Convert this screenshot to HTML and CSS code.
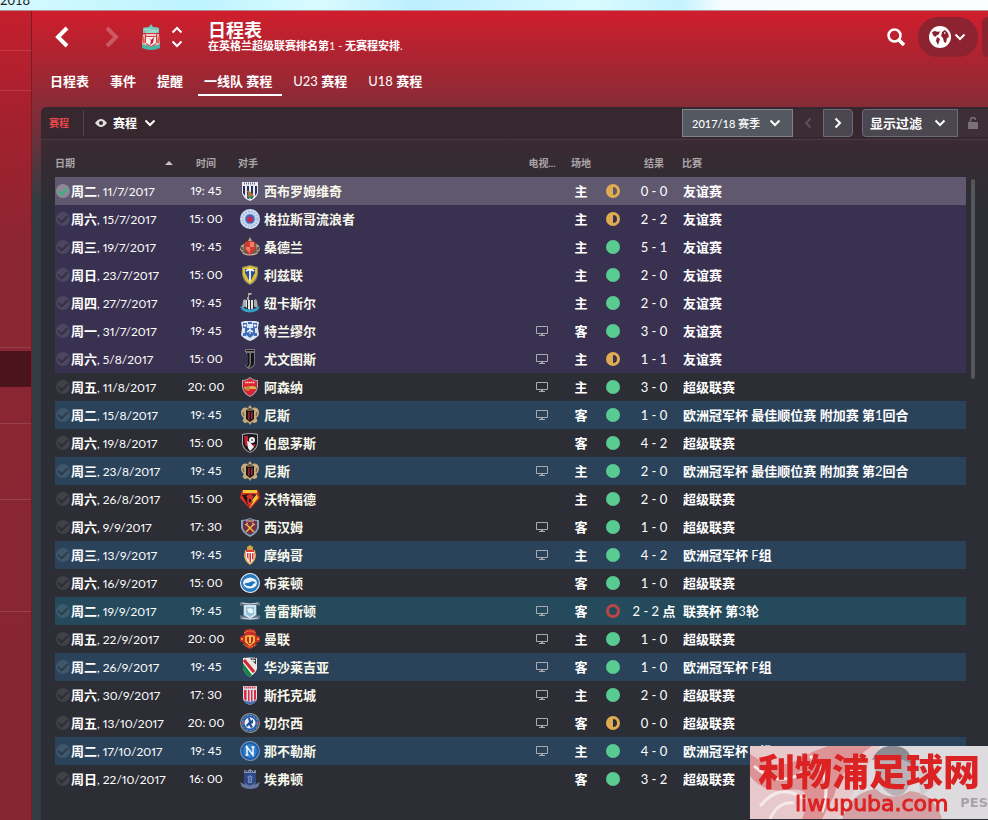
FILE: index.html
```html
<!DOCTYPE html>
<html lang="zh-CN">
  <head>
    <meta charset="UTF-8" />
    <meta name="viewport" content="width=device-width, initial-scale=1.0" />
    <title>日程表</title>
    <link rel="stylesheet" href="styles.css">
  </head>
  <body>
    <!-- club crests, all on a 20x20 grid -->
    <svg class="sprite" aria-hidden="true">
      <symbol id="chevron" viewBox="0 0 12 8"><path d="M1.500 1.500 6 6l4.500-4.500" fill="none" stroke="currentColor" stroke-width="2" /></symbol>
      <symbol id="wba" viewBox="0 0 20 20"><path d="M2 1h16v11q-1 5-8 8-7-3-8-8z" fill="#e9eaf2" /><path d="M3 5h2v10l-2-3zm4 0h2v13l-2-1zm4 0h2v12l-2 1zm4 0h2v7l-2 3z" fill="#27305f" /><path d="M4 2.500h12" stroke="#6a708f" stroke-width="2" stroke-dasharray="1 1" /><path d="M6 9l3 1 4 3 1 3-4-1-3 1 1-4z" fill="#a9713e" /><path d="M7 15h7l-4 3z" fill="#3c9354" /></symbol>
      <symbol id="rangers" viewBox="0 0 20 20"><circle cx="10" cy="10" r="10" fill="#d6e2f3" /><circle cx="10" cy="10" r="7.500" fill="none" stroke="#a9c0e6" stroke-width="2.500" stroke-dasharray="2 1" /><circle cx="10" cy="10" r="5.500" fill="#8fb0df" /><circle cx="10" cy="10" r="4.500" fill="#4662ae" /><path d="M7.500 8h5v4L10 13.500 7.500 12z" fill="#d4264d" /></symbol>
      <symbol id="sunderland" viewBox="0 0 20 20"><path d="M10 0l2 4H8z" fill="#b6a983" /><path d="M1 8q4-3 9-3t9 3v7q-4 3-9 3t-9-3z" fill="#6d5a50" /><path d="M5 5q5-2 10 0v8l-5 5-5-5z" fill="#d53a31" /><path d="M10 5h4v5h-4zM6 10h4v6l-4-4z" fill="#ee806b" /><path d="M4 7 1 9l-1 4 3 2zM16 7l3 2 1 4-3 2z" fill="#bcae90" /><path d="M2 10v3M18 10v3" stroke="#443b38" stroke-width="1.500" /><path d="M2 15q8 5 16 0l-1 2q-7 3-14 0z" fill="#d9b7a4" /></symbol>
      <symbol id="leeds" viewBox="0 0 20 20"><path d="M2 2q4-1 8-2 4 1 8 2v7q-1 8-8 11-7-3-8-11z" fill="#8b8a6c" /><path d="M3 3q4-1 7-2 3 1 7 2v6q-1 6-7 10-6-4-7-10z" fill="#e6c42b" /><path d="M5 4h10v5q-1 5-5 8-4-3-5-8z" fill="#2d4c9c" /><path d="M10 4v13" stroke="#dfe3ee" stroke-width="2" /><path d="M6 6q4-3 8 0" fill="none" stroke="#fff" stroke-width="2" /><path d="M5 9l4 8M15 9l-4 8" stroke="#e6c42b" stroke-width="1.500" /></symbol>
      <symbol id="newcastle" viewBox="0 0 20 20"><path d="M8 0h4l-1 2h-2v5h3v3H7V4h1z" fill="#b5a697" /><path d="M3 8q1-3 3-1l1 6-5 2zM17 8q-1-3-3-1l-1 6 5 2z" fill="#a4adb0" /><path d="M6 7h8v7q-2 3-4 3t-4-3z" fill="#e6e6e6" /><path d="M7 7h1v9H7zm3 0h1v10h-1zm3 0h1v8h-1z" fill="#212429" /><path d="M0 13q10 7 20 0l-2 4q-8 5-16 0z" fill="#32a2c7" /></symbol>
      <symbol id="tranmere" viewBox="0 0 20 20"><path d="M1 1l4-1h10l4 1-1 6 1 7q-3 4-9 6-6-2-9-6l1-7z" fill="#dce5f4" /><path d="M3 2h4v5H3zm10 0h4v5h-4zM3 12h3v3H3zm11 0h3v3h-3zM8 1h4v2H8z" fill="#446dbb" /><path d="M5 7h10v6l-5 4-5-4z" fill="#3d6cba" /><path d="M5 3v3M15 3v3M3.500 4.500h3M13.500 4.500h3M10 6v7" stroke="#fff" /><path d="M7 11l3-2 3 2" stroke="#fff" fill="none" stroke-width="1.500" /></symbol>
      <symbol id="juventus" viewBox="0 0 20 20"><path d="M5 0h10v3H5zM6 3h9v11q0 4-6 6-3-1-4-4 3 0 3-3V5H6z" fill="#77757b" /><path d="M6 1h8v1H6zM7 4h2.500v10q0 3-3 4v-2q1.500 0 1.500-3V5H7zM11 4h3v10q0 3-5 5 2-2 2-5z" fill="#121217" /></symbol>
      <symbol id="arsenal" viewBox="0 0 20 20"><path d="M2 3q5 0 8-3 3 3 8 3v7q-1 7-8 10-7-3-8-10z" fill="#a8aebb" /><path d="M3 4q4 0 7-3 3 3 7 3v6q-1 6-7 9-6-3-7-9z" fill="#dc2430" /><path d="M5 5.500h10" stroke="#f4d9d4" stroke-width="1.500" stroke-dasharray="1.500 .5" /><path d="M4 10l9-1 3 1v2H8q-1 2-3 0z" fill="#d9b457" /><circle cx="8" cy="12" r="2" fill="#b98735" /></symbol>
      <symbol id="nice" viewBox="0 0 20 20"><path d="M10 0l2 3q6-2 7 4 0 4-3 6 3 3-1 5-2 0-3-1l-2 3-2-3q-1 1-3 1-4-2-1-5-3-2-3-6 1-6 7-4z" fill="#c6ab7d" /><path d="M6 5h8v9l-4 3-4-3z" fill="#17161a" /><path d="M8 7h1.500v8H8zm3 0h1.500v7H11z" fill="#a3262e" /><path d="M7 4q3-2 6 0v2H7z" fill="#6c5c48" /><path d="M3 7l1 4M17 7l-1 4" stroke="#6c5c48" /></symbol>
      <symbol id="bournemouth" viewBox="0 0 20 20"><path d="M2 1q8-2 16 0v10q-1 6-8 9-7-3-8-9z" fill="#aaa8aa" /><path d="M3 2q7-2 14 0v9q-1 5-7 8-6-3-7-8z" fill="#17171a" /><path d="M4 3h4v11l-3-2zM14 11l2 1-6 6v-3z" fill="#c71f31" /><path d="M7 8l3 1 4 5-4 4-2-3z" fill="#eee" /><circle cx="12" cy="7" r="3" fill="#f3f3f3" /><path d="M11 7l1-1 1 1-1 1z" fill="#111" /></symbol>
      <symbol id="watford" viewBox="0 0 20 20"><path d="M2 1h16l2 8-10 11L0 9z" fill="#e13229" /><path d="M3 1h14v3H3z" fill="#f1c835" /><path d="M2 6l7 12-2-8 2-2V5zM11 5v13l7-12z" fill="#191515" /><path d="M17 5l1 4-8 10 2-8z" fill="#f3cf36" /><path d="M6 7l4-2 4 2-2 3 1 3-3 5-3-5 1-3z" fill="#d5342a" /><path d="M9 10h2v3H9z" fill="#191515" /></symbol>
      <symbol id="westham" viewBox="0 0 20 20"><path d="M1 3q5 0 9-2 4 2 9 2v8q-2 6-9 9-7-3-9-9z" fill="#7ea4ba" /><path d="M3 4q4 0 7-2 3 2 7 2v7q-2 5-7 7-5-2-7-7z" fill="#762c41" /><path d="M6 7l8 8M14 7l-8 8" stroke="#e9bd48" stroke-width="1.500" /><path d="M5 8l3-2M12 6l3 2M6 4h8" stroke="#ddc9af" /></symbol>
      <symbol id="monaco" viewBox="0 0 20 20"><path d="M7 2l3-2 3 2v3H7z" fill="#d1a53c" /><path d="M5 5h10l1 6q-1 6-6 9-5-3-6-9z" fill="#dcb35d" /><path d="M6 6h8v6q-1 4-4 6-3-2-4-6z" fill="#fff" /><path d="M7 8h1.500v7L7 12zm2.500 0H11v9H9.500zM12 8h1.500v5L12 15z" fill="#dc2f36" /><path d="M6 5h8v2H6z" fill="#e13b3b" /></symbol>
      <symbol id="brighton" viewBox="0 0 20 20"><circle cx="10" cy="10" r="10" fill="#eef4fa" /><circle cx="10" cy="10" r="9" fill="#2879bd" /><path d="M4 7q6-5 12 0l1 3-1 3q-6 5-12 0l-1-3z" fill="#eef6fc" /><path d="M4 9q3 2 6 0l3-1 3 2q-3 0-4 3-5 1-8-2l2-1z" fill="#2176bb" /></symbol>
      <symbol id="preston" viewBox="0 0 20 20"><path d="M0 1q10 3 20 0v4l-3-1v11l3-1v4q-10 2-20 0v-4l3 1V4L0 5z" fill="#66788f" /><path d="M2 2q8 2 16 0M2 17q8 2 16 0" stroke="#d5dfe9" fill="none" /><path d="M4 4h12v10l-6 4-6-4z" fill="#d5e5ee" /><path d="M6 6h8v7l-4 3-4-3z" fill="#8fc3de" /><path d="M7 8l4-1 2 2v3H9z" fill="#eef7fb" /></symbol>
      <symbol id="manutd" viewBox="0 0 20 20"><path d="M5 1q5-2 10 0l1 5 4 2v4l-4 2q-2 5-6 6-4-1-6-6l-4-2V8l4-2z" fill="#c92c29" /><path d="M4 4q6-4 12 0M3 15q7 6 14 0" fill="none" stroke="#e8a536" stroke-dasharray="2 1" /><path d="M5 7q5-2 10 0v6l-5 4-5-4z" fill="#edb73e" /><path d="M7 8h6v4l-2 3H9l-2-3z" fill="#b92825" /><path d="M9 8h2v6H9z" fill="#f0c84f" /><circle cx="2" cy="10" r="1" fill="#efb938" /><circle cx="18" cy="10" r="1" fill="#efb938" /></symbol>
      <symbol id="legia" viewBox="0 0 20 20"><path d="M3 1q7-1 14 0v11q-2 5-7 8-5-3-7-8z" fill="#ebe9e1" /><path d="M3 6l9 12-2 2q-5-3-7-8z" fill="#168447" /><path d="M4 3l10 12" stroke="#d32431" stroke-width="3" /><path d="M10 1.500h6v6z" fill="#393a36" /><path d="M12 3l3 1" stroke="#eee" stroke-width="1.500" /></symbol>
      <symbol id="stoke" viewBox="0 0 20 20"><path d="M3 1h14v12q0 5-7 7-7-2-7-7z" fill="#dbe0ea" /><path d="M4 5h2.500v11L4 14zm4 0h1.500v11H8zm3 0h1.500v11H11zm3 0h2v9l-2 2z" fill="#d82d43" /><path d="M4 2.500h12" stroke="#dc5265" stroke-width="2" stroke-dasharray="1.500 .5" /><path d="M3 15q7 3 14 0-2 4-7 5-5-1-7-5z" fill="#4a6eab" /></symbol>
      <symbol id="chelsea" viewBox="0 0 20 20"><circle cx="10" cy="10" r="10" fill="#9c9a84" /><circle cx="10" cy="10" r="9" fill="#2257a2" /><circle cx="10" cy="10" r="7.500" fill="none" stroke="#8ba8d2" stroke-dasharray="2 1.500" /><circle cx="10" cy="10" r="5.500" fill="#f2f4f8" /><path d="M8 5h2l1 3 2-2v4l-2 1 2 3-2 1-2-3-2 2-1-2 3-3z" fill="#1c4b97" /><circle cx="3" cy="10" r="1" fill="#d34646" /><circle cx="17" cy="10" r="1" fill="#d34646" /></symbol>
      <symbol id="napoli" viewBox="0 0 20 20"><circle cx="10" cy="10" r="10" fill="#7f9bbb" /><circle cx="10" cy="10" r="9" fill="#1f5ba8" /><circle cx="10" cy="10" r="7" fill="#2f7fcb" /><path d="M7 14V6l6 8V6M5.500 6H8M5.500 14h3M11.500 6h3" fill="none" stroke="#f4fbff" stroke-width="1.500" /></symbol>
      <symbol id="everton" viewBox="0 0 20 20"><path d="M4 1l3 1 3-2 3 2 3-1v12q-2 4-6 6-4-2-6-6z" fill="#8492b3" /><path d="M4 4h12v9l-6 5-6-5z" fill="#2f4888" /><path d="M7 8l3-2 3 2-1 1v5H8V9z" fill="#7186bb" /><path d="M10 8v5" stroke="#33498a" /><path d="M0 13l4 2q6 3 12 0l4-2-2 5q-8 4-16 0z" fill="#6577a4" /><path d="M5 2.500h10" stroke="#38466d" stroke-dasharray="1 1" /></symbol>
      <symbol id="liverpool" viewBox="0 0 20 26"><path d="M2 4q3-1 6-1l2-3 2 3q3 0 6 1v5H2z" fill="#76c9bd" /><path d="M3 5l14 2M5 8h10" stroke="#b9e2d9" /><path d="M2 10h16l1 10-4 3H5l-4-3z" fill="#e4b9b5" /><path d="M4 9h12v9q-2 4-6 5-4-1-6-5z" fill="#d43b45" /><path d="M5 10h10v2H5z" fill="#f0c9c6" /><path d="M5 13h10v6l-5 3-5-3z" fill="#f8eeee" /><path d="M8 14l2 2 3-3-1 6-3 2 1-4z" fill="#c61b32" /><path d="M2 13l1 6M18 13l-1 6" stroke="#d9614a" stroke-width="2" /><path d="M1 20q3 2 5 1l4 2 4-2q2 1 5-1v4q-4 2-9 2t-9-2z" fill="#45b5a6" /></symbol>
      <symbol id="tv" viewBox="0 0 12 11"><path d="M.5.500h11v7H.5z" fill="none" stroke="currentColor" /><path d="M5 8h2v1h2v1H3V9h2z" fill="currentColor" /></symbol>
      <symbol id="win" viewBox="0 0 14 14"><circle cx="7" cy="7" r="7" fill="#57cb90" /></symbol>
      <symbol id="draw" viewBox="0 0 14 14"><path fill-rule="evenodd" d="M7 0a7 7 0 0 1 0 14A7 7 0 0 1 7 0zM7 3v8a4 4 0 0 0 0-8z" fill="#e0ac51" /></symbol>
      <symbol id="loss" viewBox="0 0 14 14"><circle cx="7" cy="7" r="5.500" fill="none" stroke="#bd4544" stroke-width="3" /></symbol>
    </svg>

    <div class="strip">2018</div>

    <div class="app">
      <nav class="sidebar">
        <a href="#" class="side-short" aria-label="主页"></a>
        <a href="#" class="side-short" aria-label="收件箱"></a>
        <a href="#" class="side-tall" aria-label="球队"></a>
        <a href="#" class="side-active" aria-label="日程表"></a>
        <a href="#" class="side-short" aria-label="赛事"></a>
        <a href="#" class="side-mid" aria-label="球探"></a>
        <a href="#" class="side-long" aria-label="俱乐部"></a>
      </nav>

      <div class="main">
        <header class="topbar">
          <button class="icon-btn" aria-label="后退"><svg width="14" height="22" viewBox="0 0 14 22"><path d="M12 2 3 11l9 9" fill="none" stroke="#fff" stroke-width="4" /></svg></button>
          <button class="icon-btn faded" aria-label="前进"><svg width="14" height="22" viewBox="0 0 14 22"><path d="m2 2 9 9-9 9" fill="none" stroke="#fff" stroke-width="4" /></svg></button>
          <svg class="club" width="20" height="26"><use href="#liverpool" /></svg>
          <div class="stepper">
            <button class="icon-btn up" aria-label="上一个"><svg width="12" height="8"><use href="#chevron" /></svg></button>
            <button class="icon-btn" aria-label="下一个"><svg width="12" height="8"><use href="#chevron" /></svg></button>
          </div>
          <div class="heading">
            <h1>日程表</h1>
            <p><b>在英格兰超级联赛排名第</b>1 - <b>无赛程安排</b>.</p>
          </div>
          <button class="icon-btn search" aria-label="搜索"><svg width="18" height="18" viewBox="0 0 18 18"><circle cx="7.500" cy="7.500" r="6" fill="none" stroke="#fff" stroke-width="2.500" /><path d="m12 12 5 5" stroke="#fff" stroke-width="3.500" /></svg></button>
          <button class="pill" aria-label="世界">
            <svg width="22" height="22" viewBox="0 0 22 22"><circle cx="11" cy="11" r="11" fill="#fff" /><path d="M3 6l3-1 3 1 2-1-1 3-3 2-1 1-2-2zM8 11l3 2-1 3-1 3-2-4zM13 6l3-2 3 3 1 4-2 1-1 5-2-1-1-4-2-2 1-3z" fill="#8c1f2d" /><path d="M15 6l2 1-2 1z" fill="#fff" /></svg>
            <svg width="12" height="8"><use href="#chevron" /></svg>
          </button>
          <span class="pill-edge"></span>
        </header>

        <nav class="tabs">
          <a href="#"><b>日程表</b></a>
          <a href="#"><b>事件</b></a>
          <a href="#"><b>提醒</b></a>
          <a href="#" class="active"><b>一线队 赛程</b></a>
          <a href="#">U23 <b>赛程</b></a>
          <a href="#">U18 <b>赛程</b></a>
        </nav>

        <section class="panel">
          <div class="toolbar">
            <span class="crumb">赛程</span>
            <label class="view">
              <svg width="12" height="8" viewBox="0 0 12 8"><path fill-rule="evenodd" d="M0 4q6-8 12 0-6 8-12 0zM6 2a2 2 0 0 0 0 4 2 2 0 0 0 0-4z" fill="#e0dcdd" /></svg>
              <span class="drop view-drop">
                <select aria-label="视图"><option>赛程</option></select>
                <svg width="12" height="8"><use href="#chevron" /></svg>
              </span>
            </label>
            <span class="drop season">
              <select aria-label="赛季"><option>2017/18 赛季</option></select>
              <svg width="12" height="8"><use href="#chevron" /></svg>
            </span>
            <button class="step prev" aria-label="上赛季"><svg width="8" height="12" viewBox="0 0 8 12"><path d="M6.500 1.500 2 6l4.500 4.500" fill="none" stroke="currentColor" stroke-width="2" /></svg></button>
            <button class="step next" aria-label="下赛季"><svg width="8" height="12" viewBox="0 0 8 12"><path d="M1.500 1.500 6 6l-4.500 4.500" fill="none" stroke="currentColor" stroke-width="2" /></svg></button>
            <span class="drop filter">
              <select aria-label="过滤"><option>显示过滤</option></select>
              <svg width="12" height="8"><use href="#chevron" /></svg>
            </span>
            <button class="step lock" aria-label="锁定"><svg width="10" height="12" viewBox="0 0 10 12"><path d="M0 5h10v7H0z" fill="currentColor" /><path d="M2.500 6V3a2.500 2.500 0 0 1 5 0" fill="none" stroke="currentColor" stroke-width="1.500" /></svg></button>
          </div>

          <div class="list">
            <table class="fixtures">
              <colgroup>
                <col class="c-date"><col class="c-time"><col><col class="c-tv"><col class="c-venue"><col class="c-dot"><col class="c-score"><col class="c-comp">
              </colgroup>
              <thead>
                <tr>
                  <th><span class="sorted">日期 <i></i></span></th>
                  <th class="mid">时间</th>
                  <th class="team-head">对手</th>
                  <th class="mid">电视...</th>
                  <th class="mid">场地</th>
                  <th></th>
                  <th class="mid">结果</th>
                  <th>比赛</th>
                </tr>
              </thead>
              <tbody id="rows"></tbody>
            </table>
            <div class="scrollbar"></div>
          </div>
        </section>
      </div>
    </div>

    <div class="watermark">
      <svg class="photo" viewBox="0 0 238 73" preserveAspectRatio="none" aria-hidden="true">
        <path d="M0 0h238v73H0z" fill="#dddbde" />
        <path d="M0 0h130L88 73H0z" fill="#e8c9cb" />
        <path d="M0 8Q30 30 62 6L78 0h44Q90 22 84 50L72 73H52Q66 40 40 44T0 30z" fill="#dd9296" />
        <path d="M4 20q26 24 52 4M10 60q20-24 42-8M60 10q24 20 12 56M20 73q8-18 24-16" fill="none" stroke="#f5e9ea" stroke-width="3" />
        <path d="M124 16q4-16 20-16t18 20l-4 22q-8 12-18 6-14-8-16-32z" fill="#b9b1b5" />
        <path d="M122 14q6-16 24-14 16 2 15 18-14-10-39-4z" fill="#8d8a91" />
        <path d="M92 73q10-28 34-30 14 14 34 2 24 2 32 28z" fill="#d3a2a6" />
        <path d="M165 14l22 24-16 12z" fill="#cfccd1" />
      </svg>
      <strong>利物浦足球网</strong>
      <span>liwupuba.com</span>
      <em>PES</em>
    </div>

    <script>
      const fixtures = [
        // date, time, crest, opponent, tv, venue, result, score, competition, row type
        ["周二, 11/7/2017", "19: 45", "wba", "西布罗姆维奇", 0, "主", "draw", "0 - 0", "友谊赛", "friendly selected"],
        ["周六, 15/7/2017", "15: 00", "rangers", "格拉斯哥流浪者", 0, "主", "draw", "2 - 2", "友谊赛", "friendly"],
        ["周三, 19/7/2017", "19: 45", "sunderland", "桑德兰", 0, "主", "win", "5 - 1", "友谊赛", "friendly"],
        ["周日, 23/7/2017", "15: 00", "leeds", "利兹联", 0, "主", "win", "2 - 0", "友谊赛", "friendly"],
        ["周四, 27/7/2017", "19: 45", "newcastle", "纽卡斯尔", 0, "主", "win", "2 - 0", "友谊赛", "friendly"],
        ["周一, 31/7/2017", "19: 45", "tranmere", "特兰缪尔", 1, "客", "win", "3 - 0", "友谊赛", "friendly"],
        ["周六, 5/8/2017", "15: 00", "juventus", "尤文图斯", 1, "主", "draw", "1 - 1", "友谊赛", "friendly"],
        ["周五, 11/8/2017", "20: 00", "arsenal", "阿森纳", 1, "主", "win", "3 - 0", "超级联赛", "league"],
        ["周二, 15/8/2017", "19: 45", "nice", "尼斯", 1, "客", "win", "1 - 0", "欧洲冠军杯 最佳顺位赛 附加赛 第1回合", "europe"],
        ["周六, 19/8/2017", "15: 00", "bournemouth", "伯恩茅斯", 0, "客", "win", "4 - 2", "超级联赛", "league"],
        ["周三, 23/8/2017", "19: 45", "nice", "尼斯", 1, "主", "win", "2 - 0", "欧洲冠军杯 最佳顺位赛 附加赛 第2回合", "europe"],
        ["周六, 26/8/2017", "15: 00", "watford", "沃特福德", 0, "主", "win", "2 - 0", "超级联赛", "league"],
        ["周六, 9/9/2017", "17: 30", "westham", "西汉姆", 1, "客", "win", "1 - 0", "超级联赛", "league"],
        ["周三, 13/9/2017", "19: 45", "monaco", "摩纳哥", 1, "主", "win", "4 - 2", "欧洲冠军杯 F组", "europe"],
        ["周六, 16/9/2017", "15: 00", "brighton", "布莱顿", 0, "客", "win", "1 - 0", "超级联赛", "league"],
        ["周二, 19/9/2017", "19: 45", "preston", "普雷斯顿", 1, "客", "loss", "2 - 2 点", "联赛杯 第3轮", "cup"],
        ["周五, 22/9/2017", "20: 00", "manutd", "曼联", 1, "主", "win", "1 - 0", "超级联赛", "league"],
        ["周二, 26/9/2017", "19: 45", "legia", "华沙莱吉亚", 1, "客", "win", "1 - 0", "欧洲冠军杯 F组", "europe"],
        ["周六, 30/9/2017", "17: 30", "stoke", "斯托克城", 1, "主", "win", "2 - 0", "超级联赛", "league"],
        ["周五, 13/10/2017", "20: 00", "chelsea", "切尔西", 1, "客", "draw", "0 - 0", "超级联赛", "league"],
        ["周二, 17/10/2017", "19: 45", "napoli", "那不勒斯", 1, "主", "win", "4 - 0", "欧洲冠军杯 F组", "europe"],
        ["周日, 22/10/2017", "16: 00", "everton", "埃弗顿", 0, "客", "win", "3 - 2", "超级联赛", "league"],
      ];

      // chinese text is bold, digits and latin stay regular
      const bold = (text) => text.replace(/[\u4e00-\u9fff]+/g, "<b>$&</b>");
      const icon = (id, w, h) => `<svg width="${w}" height="${h}"><use href="#${id}" /></svg>`;

      document.getElementById("rows").innerHTML = fixtures
        .map(([date, time, crest, team, tv, venue, result, score, comp, type]) => `
          <tr class="${type}">
            <td><label class="date"><input type="checkbox"${type.includes("selected") ? " checked" : ""}><span>${bold(date)}</span></label></td>
            <td class="mid time">${time}</td>
            <td><div class="team">${icon(crest, 20, 20)}<b>${team}</b></div></td>
            <td class="mid tv">${tv ? icon("tv", 12, 11) : ""}</td>
            <td class="mid"><b>${venue}</b></td>
            <td class="mid">${icon(result, 14, 14)}</td>
            <td class="mid">${bold(score)}</td>
            <td>${bold(comp)}</td>
          </tr>`)
        .join("");
    </script>
  </body>
</html>
```
FILE: styles.css
```css
* {
  box-sizing: border-box;
}

body {
  margin: 0;
  height: 100vh;
  display: flex;
  flex-direction: column;
  overflow: hidden;
  font-family: Lato, "Noto Sans CJK SC", sans-serif;
  font-size: 13px;
  color: #fff;
  background: #2b2d35;
}

h1,
p {
  margin: 0;
}

a {
  color: inherit;
  text-decoration: none;
}

button,
select {
  font: inherit;
  color: inherit;
  border: none;
  background: none;
  padding: 0;
  cursor: pointer;
}

svg {
  display: block;
  flex: none;
}

.sprite {
  position: absolute;
  width: 0;
  height: 0;
}

.strip {
  height: 11px;
  flex: none;
  overflow: hidden;
  font-size: 13px;
  line-height: 0;
  color: #222;
  background: linear-gradient(90deg, #d5faff, #bdf3ff 20%, #d9fbff 32%, #bdeeff 42%, #d8fbff 60%, #c4f2ff 69%, #f7fdff 73%, #fafeff);
  border-bottom: 1px solid #b08d92;
}

.app {
  flex: 1;
  min-height: 0;
  display: flex;
}

/* left menu */
.sidebar {
  width: 32px;
  flex: none;
  background: linear-gradient(#c51f2d, #a6202e 100px, #8b2632 240px, #862633);
  border-right: 1px solid #741d29;
}

.sidebar a {
  display: block;
  border-bottom: 1px solid rgba(255, 255, 255, 0.12);
}

.side-short {
  height: 40px;
}

.side-tall {
  height: 257px;
  margin-bottom: 3px;
}

.sidebar .side-active {
  height: 36px;
  background: #4b141c;
  border: none;
}

.side-active + .side-short {
  height: 37px;
}

.side-mid {
  height: 76px;
}

.side-long {
  height: 112px;
}

.main {
  flex: 1;
  min-width: 0;
  display: flex;
  flex-direction: column;
  background: linear-gradient(#d01e2d, #aa2431 50px, #862c37 96px, #333c43 190px, #343d44);
}

/* top bar */
.topbar {
  height: 52px;
  flex: none;
  display: flex;
  align-items: center;
  padding-left: 23px;
}

.icon-btn {
  display: flex;
}

.faded {
  margin-left: 36px;
  opacity: 0.25;
}

.club {
  margin-left: 22px;
}

.stepper {
  display: flex;
  flex-direction: column;
  gap: 6px;
  margin: 0 25px 0 10px;
}

.up {
  transform: rotate(180deg);
}

.heading {
  flex: 1;
}

.heading h1 {
  font-size: 18px;
  line-height: 18px;
}

.heading p {
  font-size: 11px;
  line-height: 14px;
}

.pill {
  display: flex;
  align-items: center;
  gap: 3px;
  height: 40px;
  margin: 0 4px 0 13px;
  padding: 0 12px 0 11px;
  border-radius: 20px;
  background: #8d2330;
}

.pill-edge {
  width: 6px;
  height: 40px;
  border-radius: 20px 0 0 20px;
  background: #8d2330;
}

.tabs {
  height: 44px;
  flex: none;
  display: flex;
  gap: 5px;
  padding-left: 12px;
}

.tabs a {
  height: 33px;
  padding: 0 10px 0 6px;
  line-height: 37px;
}

.tabs .active {
  border-bottom: 2px solid #fff;
}

/* fixtures panel */
.panel {
  flex: 1;
  min-height: 0;
  margin-left: 9px;
  border-radius: 6px 0 0 0;
  overflow: hidden;
  background: linear-gradient(#3b2a31 32px, #2c2d35 100px, #2c2e36);
}

.toolbar {
  height: 33px;
  display: flex;
  align-items: center;
  background: #37272e;
  border-bottom: 1px solid #4a3a42;
}

.crumb {
  width: 43px;
  padding-left: 8px;
  font-size: 10px;
  font-weight: bold;
  line-height: 26px;
  color: #e8484c;
  border-right: 1px solid #54454b;
}

.view {
  display: flex;
  align-items: center;
  gap: 6px;
  margin: 0 auto 0 11px;
}

.drop {
  display: grid;
  align-items: center;
}

.drop select,
.drop svg {
  grid-area: 1 / 1;
}

.drop select {
  appearance: none;
  width: 100%;
  height: 28px;
  font-weight: bold;
}

.drop svg {
  justify-self: end;
  margin-right: 12px;
  pointer-events: none;
}

.view-drop {
  width: 43px;
  font-size: 12px;
}

.view-drop svg {
  margin-right: 0;
}

.season {
  width: 111px;
  font-size: 11px;
  background: #545961;
}

.season select {
  padding-left: 9px;
  border: 1px solid #7d828b;
  font-weight: 500;
}

.step {
  width: 30px;
  height: 28px;
  display: flex;
  align-items: center;
  justify-content: center;
}

.prev {
  color: #5e5058;
  background: #3c2d35;
}

.next {
  margin-right: 9px;
  background: #4a4750;
  border: 1px solid #6b6a75;
  border-radius: 0 4px 4px 0;
}

.filter {
  width: 96px;
  background: #4a4750;
  border-radius: 4px 0 0 4px;
}

.filter select {
  padding-left: 7px;
  border: 1px solid #6b6a75;
  border-radius: 4px 0 0 4px;
}

.lock {
  color: #797078;
  background: #3d2f36;
}

.list {
  display: flex;
  padding: 9px 13px 0 14px;
}

.fixtures {
  flex: 1;
  min-width: 0;
  table-layout: fixed;
  border-collapse: collapse;
}

.c-date {
  width: 129px;
}

.c-time {
  width: 44px;
}

.c-tv {
  width: 40px;
}

.c-venue {
  width: 38px;
}

.c-dot {
  width: 26px;
}

.c-score {
  width: 56px;
}

.c-comp {
  width: 284px;
}

.fixtures th {
  height: 28px;
  padding: 0;
  font-size: 10px;
  line-height: 28px;
  text-align: left;
  color: #aaa5a7;
}

.fixtures td {
  height: 28px;
  padding: 0;
  line-height: 24px;
  white-space: nowrap;
}

.fixtures td:last-child {
  padding-left: 1px;
}

.fixtures .mid {
  text-align: center;
}

.mid svg {
  margin: 0 auto;
}

.fixtures .team-head {
  padding-left: 10px;
}

.sorted {
  display: flex;
  align-items: center;
  justify-content: space-between;
  padding-right: 11px;
}

.sorted i {
  border: 4px solid transparent;
  border-top: none;
  border-bottom-color: #c6c2c4;
}

.friendly {
  background: #393150;
}

.league {
  background: #2c2d35;
}

.europe {
  background: #2a435b;
}

.cup {
  background: #244a5c;
}

.fixtures .selected {
  background: #5f586f;
}

.date {
  display: flex;
  align-items: center;
  gap: 1px;
}

.date,
.time {
  font-size: 12px;
  font-variant-numeric: proportional-nums;
}

.date b {
  font-size: 13px;
}

.date input {
  appearance: none;
  width: 14px;
  height: 14px;
  margin: 0 0 0 1px;
  display: grid;
  place-items: center;
  border-radius: 50%;
  background: rgba(255, 255, 255, 0.1);
}

.date input::before {
  content: "";
  width: 8px;
  height: 4px;
  margin-bottom: 2px;
  border: solid rgba(0, 0, 0, 0.3);
  border-width: 0 0 2px 2px;
  transform: rotate(-45deg);
}

.date input:checked {
  background: #8e8799;
}

.date input:checked::before {
  border-color: #35b57c;
}

.team {
  display: flex;
  align-items: center;
  gap: 4px;
  padding-left: 12px;
  color: #f7f7ea;
}

.tv {
  color: #a9abb3;
}

.scrollbar {
  width: 4px;
  height: 200px;
  margin: 30px 0 0 5px;
  border-radius: 2px;
  background: #55565c;
}

/* site logo over the bottom corner */
.watermark {
  position: fixed;
  right: 0;
  bottom: 1px;
  width: 238px;
  height: 73px;
  overflow: hidden;
  display: flex;
  flex-direction: column;
  padding-left: 8px;
  color: #dc2323;
}

.photo {
  position: absolute;
  inset: 0;
  width: 100%;
  height: 100%;
}

.watermark strong {
  position: relative;
  font-size: 37px;
  font-weight: 900;
  line-height: 52px;
  white-space: nowrap;
}

.watermark span {
  position: relative;
  padding-left: 37px;
  font-family: "DejaVu Sans", sans-serif;
  font-size: 22px;
  line-height: 12px;
  -webkit-text-stroke: 1px #dc2323;
}

.watermark em {
  position: absolute;
  right: 0;
  bottom: 9px;
  font: bold 13px "DejaVu Sans", sans-serif;
  color: #a5a2a8;
}
```
